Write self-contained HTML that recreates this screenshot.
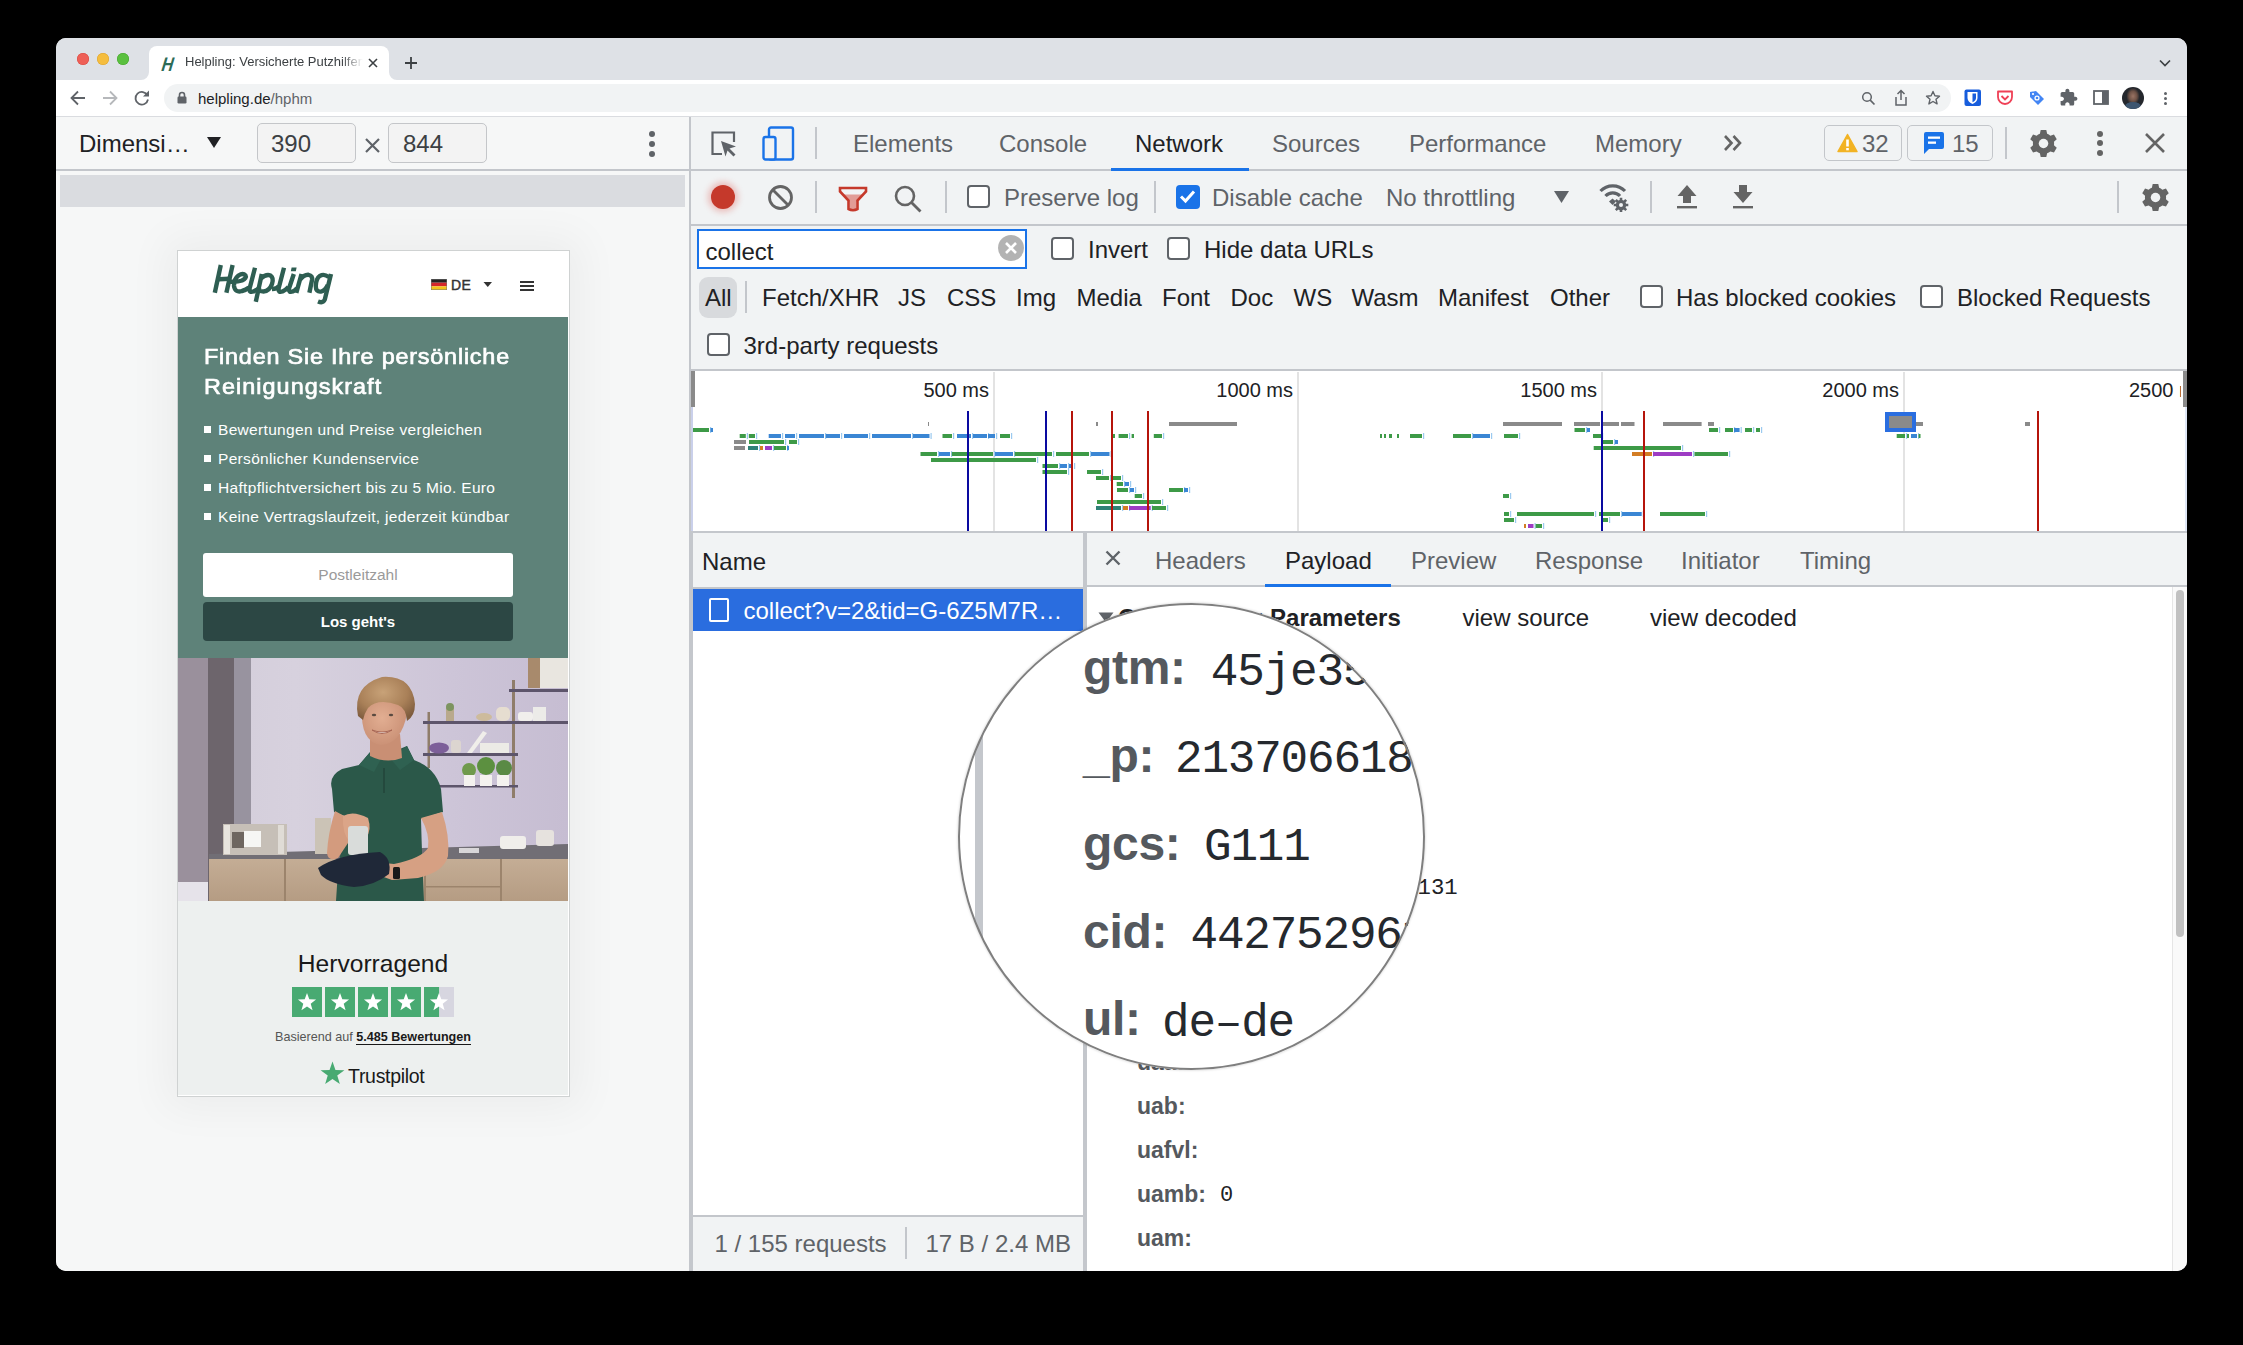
<!DOCTYPE html>
<html><head><meta charset="utf-8"><title>Helpling DevTools</title>
<style>
html,body{margin:0;padding:0;width:2243px;height:1345px;overflow:hidden;background:#000;}
body{position:relative;font-family:"Liberation Sans",sans-serif;}
</style></head><body>
<div style="position:absolute;left:56px;top:38px;width:2131px;height:1233px;background:#f6f7f7;border-radius:10px;overflow:hidden;"></div>
<div style="position:absolute;left:56px;top:38px;width:2131px;height:42px;background:#dee1e6;border-radius:10px 10px 0 0;"></div>
<div style="position:absolute;left:77px;top:53px;width:12px;height:12px;border-radius:50%;background:#ee5f57;box-shadow:inset 0 0 0 0.5px #d9463f;"></div>
<div style="position:absolute;left:97px;top:53px;width:12px;height:12px;border-radius:50%;background:#f5bd3e;box-shadow:inset 0 0 0 0.5px #dca22b;"></div>
<div style="position:absolute;left:117px;top:53px;width:12px;height:12px;border-radius:50%;background:#5ac03f;box-shadow:inset 0 0 0 0.5px #44a52b;"></div>
<div style="position:absolute;left:149px;top:46px;width:240px;height:34px;background:#fff;border-radius:8px 8px 0 0;"></div>
<svg style="position:absolute;left:141px;top:72px;" width="8" height="8" viewBox="0 0 8 8"><path d="M8 0 V8 H0 A8 8 0 0 0 8 0Z" fill="#fff"/></svg>
<svg style="position:absolute;left:389px;top:72px;" width="8" height="8" viewBox="0 0 8 8"><path d="M0 0 V8 H8 A8 8 0 0 1 0 0Z" fill="#fff"/></svg>
<div style="position:absolute;left:162px;top:54.51px;font-family:'Liberation Sans',sans-serif;font-size:19.5px;line-height:19.5px;color:#2c6b57;font-weight:700;white-space:nowrap;font-style:italic;transform:scaleX(0.82) skewX(-10deg);transform-origin:left;">H</div>
<div style="position:absolute;left:185px;top:52.3px;padding-top:3px;padding-bottom:4px;width:178px;overflow:hidden;font-family:'Liberation Sans',sans-serif;font-size:13px;line-height:13px;color:#3c4043;white-space:nowrap;-webkit-mask-image:linear-gradient(90deg,#000 88%,transparent 100%);">Helpling: Versicherte Putzhilfen</div>
<svg style="position:absolute;left:367px;top:57px;" width="12" height="12" viewBox="0 0 12 12"><path d="M2 2 L10 10 M10 2 L2 10" stroke="#3c4043" stroke-width="1.6"/></svg>
<svg style="position:absolute;left:404px;top:56px;" width="14" height="14" viewBox="0 0 14 14"><path d="M7 1 V13 M1 7 H13" stroke="#3c4043" stroke-width="1.8"/></svg>
<svg style="position:absolute;left:2158px;top:57px;" width="14" height="12" viewBox="0 0 14 12"><path d="M2 3.5 L7 8.5 L12 3.5" stroke="#3c4043" stroke-width="1.7" fill="none"/></svg>
<div style="position:absolute;left:56px;top:80px;width:2131px;height:36px;background:#fff;"></div>
<div style="position:absolute;left:56px;top:116px;width:2131px;height:1px;background:#dadce0;"></div>
<svg style="position:absolute;left:69px;top:89px;" width="18" height="18" viewBox="0 0 18 18"><path d="M16 9 H3 M9 2.5 L2.5 9 L9 15.5" stroke="#5f6368" stroke-width="1.8" fill="none"/></svg>
<svg style="position:absolute;left:101px;top:89px;" width="18" height="18" viewBox="0 0 18 18"><path d="M2 9 H15 M9 2.5 L15.5 9 L9 15.5" stroke="#b6b8bb" stroke-width="1.8" fill="none"/></svg>
<svg style="position:absolute;left:133px;top:89px;" width="18" height="18" viewBox="0 0 18 18"><path d="M14.5 6.5 A6.3 6.3 0 1 0 15 10.5" stroke="#5f6368" stroke-width="1.8" fill="none"/><path d="M16 1.5 V7.5 H10 Z" fill="#5f6368"/></svg>
<div style="position:absolute;left:164px;top:84px;width:1787px;height:28px;background:#f1f3f4;border-radius:14px;"></div>
<svg style="position:absolute;left:177px;top:91px;" width="10" height="13" viewBox="0 0 10 13"><path d="M2.5 6 V4 A2.5 2.5 0 0 1 7.5 4 V6" stroke="#5f6368" stroke-width="1.6" fill="none"/><rect x="0.5" y="5.5" width="9" height="7" rx="1.2" fill="#5f6368"/></svg>
<div style="position:absolute;left:198px;top:91.20px;font-family:'Liberation Sans',sans-serif;font-size:15px;line-height:15px;color:#202124;font-weight:400;white-space:nowrap;">helpling.de<span style="color:#5f6368">/hphm</span></div>
<svg style="position:absolute;left:1861px;top:91px;" width="15" height="15" viewBox="0 0 15 15"><circle cx="6" cy="6" r="4.3" stroke="#5f6368" stroke-width="1.5" fill="none"/><path d="M9.2 9.2 L13.5 13.5" stroke="#5f6368" stroke-width="1.7"/></svg>
<svg style="position:absolute;left:1893px;top:89px;" width="16" height="18" viewBox="0 0 16 18"><path d="M3 8 V16 H13 V8" stroke="#5f6368" stroke-width="1.5" fill="none"/><path d="M8 11 V2 M4.5 5 L8 1.5 L11.5 5" stroke="#5f6368" stroke-width="1.5" fill="none"/></svg>
<svg style="position:absolute;left:1925px;top:90px;" width="16" height="16" viewBox="0 0 16 16"><path d="M8 1.5 L9.9 5.8 L14.5 6.2 L11 9.3 L12.1 13.9 L8 11.5 L3.9 13.9 L5 9.3 L1.5 6.2 L6.1 5.8 Z" stroke="#5f6368" stroke-width="1.4" fill="none" stroke-linejoin="round"/></svg>
<svg style="position:absolute;left:1964px;top:89px;" width="18" height="18" viewBox="0 0 18 18"><rect x="0.5" y="0.5" width="16.5" height="16.5" rx="2" fill="#175ddc"/><path d="M3.5 3 H13.5 V9 C13.5 12 11 13.8 8.5 15 C6 13.8 3.5 12 3.5 9 Z" fill="#fff"/><path d="M8.5 4.5 H12 V9 C12 11 10.5 12.3 8.5 13.2 Z" fill="#175ddc"/></svg>
<svg style="position:absolute;left:1996px;top:89px;" width="18" height="18" viewBox="0 0 18 18"><path d="M2 2.5 H16 V8 A7 7 0 0 1 2 8 Z" stroke="#ef4056" stroke-width="1.8" fill="none" stroke-linejoin="round"/><path d="M5.5 7 L9 10.5 L12.5 7" stroke="#ef4056" stroke-width="1.8" fill="none"/></svg>
<svg style="position:absolute;left:2028px;top:89px;" width="18" height="18" viewBox="0 0 18 18"><path d="M2 3 L8 2 L16 10 L10 16 L2 8 Z" fill="#4285f4"/><circle cx="9" cy="9" r="2.6" fill="#fff"/><circle cx="9" cy="9" r="1.3" fill="#4285f4"/><circle cx="5" cy="5" r="1.1" fill="#fff"/></svg>
<svg style="position:absolute;left:2059px;top:88px;" width="20" height="20" viewBox="0 0 20 20"><g transform="scale(0.8)"><path d="M20.5 11H19V7c0-1.1-.9-2-2-2h-4V3.5C13 2.12 11.88 1 10.5 1S8 2.12 8 3.5V5H4c-1.1 0-1.99.9-1.99 2v3.8H3.5c1.49 0 2.7 1.21 2.7 2.7s-1.21 2.7-2.7 2.7H2V20c0 1.1.9 2 2 2h3.8v-1.5c0-1.49 1.21-2.7 2.7-2.7 1.49 0 2.7 1.21 2.7 2.7V22H17c1.1 0 2-.9 2-2v-4h1.5c1.38 0 2.5-1.12 2.5-2.5S21.88 11 20.5 11z" fill="#5f6368"/></g></svg>
<svg style="position:absolute;left:2093px;top:90px;" width="16" height="15" viewBox="0 0 16 15"><rect x="1" y="1" width="14" height="13" stroke="#5f6368" stroke-width="1.8" fill="none"/><rect x="9" y="1" width="6" height="13" fill="#5f6368"/></svg>
<div style="position:absolute;left:2122px;top:87px;width:22px;height:22px;border-radius:50%;background:radial-gradient(ellipse 30% 38% at 50% 42%,#9a7464 0,#6e5246 60%,#24272c 100%),#24272c;overflow:hidden;"><div style="position:absolute;left:3px;top:15px;width:16px;height:9px;border-radius:50% 50% 0 0;background:#3d5670;"></div></div>
<div style="position:absolute;left:2163.5px;top:91.9px;width:3.2px;height:3.2px;border-radius:50%;background:#5f6368;"></div>
<div style="position:absolute;left:2163.5px;top:96.9px;width:3.2px;height:3.2px;border-radius:50%;background:#5f6368;"></div>
<div style="position:absolute;left:2163.5px;top:101.9px;width:3.2px;height:3.2px;border-radius:50%;background:#5f6368;"></div>
<div style="position:absolute;left:56px;top:117px;width:633px;height:53px;background:#f6f7f7;"></div>
<div style="position:absolute;left:56px;top:169px;width:633px;height:2px;background:#c3c6cb;"></div>
<div style="position:absolute;left:79px;top:132.02px;font-family:'Liberation Sans',sans-serif;font-size:24px;line-height:24px;color:#202124;font-weight:400;white-space:nowrap;">Dimensi…</div>
<svg style="position:absolute;left:206px;top:136px;" width="16" height="13" viewBox="0 0 16 13"><path d="M1 1 H15 L8 12 Z" fill="#202124"/></svg>
<div style="position:absolute;left:257px;top:123px;width:97px;height:38px;border:1px solid #c4c6c9;border-radius:5px;background:#f3f3f3;"></div>
<div style="position:absolute;left:271px;top:132.02px;font-family:'Liberation Sans',sans-serif;font-size:24px;line-height:24px;color:#3c4043;font-weight:400;white-space:nowrap;">390</div>
<svg style="position:absolute;left:364px;top:137px;" width="17" height="17" viewBox="0 0 17 17"><path d="M2 2 L15 15 M15 2 L2 15" stroke="#5f6368" stroke-width="2.2"/></svg>
<div style="position:absolute;left:388px;top:123px;width:97px;height:38px;border:1px solid #c4c6c9;border-radius:5px;background:#f3f3f3;"></div>
<div style="position:absolute;left:403px;top:132.02px;font-family:'Liberation Sans',sans-serif;font-size:24px;line-height:24px;color:#3c4043;font-weight:400;white-space:nowrap;">844</div>
<div style="position:absolute;left:649px;top:131px;width:6px;height:6px;border-radius:50%;background:#5f6368;"></div>
<div style="position:absolute;left:649px;top:141px;width:6px;height:6px;border-radius:50%;background:#5f6368;"></div>
<div style="position:absolute;left:649px;top:151px;width:6px;height:6px;border-radius:50%;background:#5f6368;"></div>
<div style="position:absolute;left:56px;top:171px;width:633px;height:1100px;background:#f6f7f7;border-bottom-left-radius:10px;"></div>
<div style="position:absolute;left:60px;top:175px;width:625px;height:32px;background:#dadce0;"></div>
<div style="position:absolute;left:689px;top:117px;width:2px;height:1154px;background:#c3c6cb;"></div>
<div style="position:absolute;left:691px;top:117px;width:1496px;height:52px;background:#f1f3f4;"></div>
<div style="position:absolute;left:691px;top:169px;width:1496px;height:2px;background:#c3c6cb;"></div>
<svg style="position:absolute;left:710px;top:130px;" width="28" height="28" viewBox="0 0 28 28"><path d="M12 24 H2.5 V2.5 H24 V12" stroke="#5f6368" stroke-width="2.2" fill="none"/><path d="M11 11 L26 16.5 L19.5 18.5 L25.5 24.5 L23.5 26.5 L17.5 20.5 L15.5 26.5 Z" fill="#5f6368"/></svg>
<svg style="position:absolute;left:762px;top:126px;" width="33" height="35" viewBox="0 0 33 35"><rect x="7" y="1.5" width="24" height="32" rx="2" stroke="#1a73e8" stroke-width="2.4" fill="none"/><rect x="1.5" y="11" width="12" height="22.5" rx="2" stroke="#1a73e8" stroke-width="2.4" fill="#f1f3f4"/></svg>
<div style="position:absolute;left:815px;top:127px;width:2px;height:32px;background:#c3c6cb;"></div>
<div style="position:absolute;left:853px;top:132.02px;font-family:'Liberation Sans',sans-serif;font-size:24px;line-height:24px;color:#5f6368;font-weight:400;white-space:nowrap;">Elements</div>
<div style="position:absolute;left:999px;top:132.02px;font-family:'Liberation Sans',sans-serif;font-size:24px;line-height:24px;color:#5f6368;font-weight:400;white-space:nowrap;">Console</div>
<div style="position:absolute;left:1135px;top:132.02px;font-family:'Liberation Sans',sans-serif;font-size:24px;line-height:24px;color:#202124;font-weight:400;white-space:nowrap;">Network</div>
<div style="position:absolute;left:1272px;top:132.02px;font-family:'Liberation Sans',sans-serif;font-size:24px;line-height:24px;color:#5f6368;font-weight:400;white-space:nowrap;">Sources</div>
<div style="position:absolute;left:1409px;top:132.02px;font-family:'Liberation Sans',sans-serif;font-size:24px;line-height:24px;color:#5f6368;font-weight:400;white-space:nowrap;">Performance</div>
<div style="position:absolute;left:1595px;top:132.02px;font-family:'Liberation Sans',sans-serif;font-size:24px;line-height:24px;color:#5f6368;font-weight:400;white-space:nowrap;">Memory</div>
<div style="position:absolute;left:1111px;top:168px;width:138px;height:3px;background:#1a73e8;"></div>
<svg style="position:absolute;left:1723px;top:133px;" width="22" height="20" viewBox="0 0 22 20"><path d="M2 3 L8.5 10 L2 17 M10.5 3 L17 10 L10.5 17" stroke="#646464" stroke-width="2.6" fill="none"/></svg>
<div style="position:absolute;left:1824px;top:125px;width:78px;height:36px;border:1.6px solid #c3c6ca;border-radius:5px;box-sizing:border-box;"></div>
<svg style="position:absolute;left:1837px;top:133px;" width="21" height="20" viewBox="0 0 21 20"><path d="M10.5 1.5 L20 18.5 H1 Z" fill="#f2b324" stroke="#f2b324" stroke-width="1.5" stroke-linejoin="round"/><rect x="9.2" y="6.5" width="2.6" height="7" fill="#fff"/><rect x="9.2" y="15" width="2.6" height="2.3" fill="#fff"/></svg>
<div style="position:absolute;left:1862px;top:132.02px;font-family:'Liberation Sans',sans-serif;font-size:24px;line-height:24px;color:#5f6368;font-weight:400;white-space:nowrap;">32</div>
<div style="position:absolute;left:1907px;top:125px;width:86px;height:36px;border:1.6px solid #c3c6ca;border-radius:5px;box-sizing:border-box;"></div>
<svg style="position:absolute;left:1923px;top:131px;" width="22" height="24" viewBox="0 0 22 24"><path d="M3 1 H19 A2 2 0 0 1 21 3 V16 A2 2 0 0 1 19 18 H6 L1 23 V3 A2 2 0 0 1 3 1 Z" fill="#1a73e8"/><rect x="5" y="5.5" width="12" height="2.3" fill="#fff"/><rect x="5" y="10.5" width="8" height="2.3" fill="#fff"/></svg>
<div style="position:absolute;left:1952px;top:132.02px;font-family:'Liberation Sans',sans-serif;font-size:24px;line-height:24px;color:#5f6368;font-weight:400;white-space:nowrap;">15</div>
<div style="position:absolute;left:2005px;top:127px;width:2px;height:32px;background:#c3c6cb;"></div>
<svg style="position:absolute;left:2028.5px;top:128.5px;" width="29" height="29" viewBox="0 0 29 29"><g transform="scale(1.036)"><path d="M11.3 1 H16.7 L17.5 4.6 A10 10 0 0 1 20.6 6.4 L24.1 5.3 L26.8 9.9 L24.1 12.4 A10 10 0 0 1 24.1 15.6 L26.8 18.1 L24.1 22.7 L20.6 21.6 A10 10 0 0 1 17.5 23.4 L16.7 27 H11.3 L10.5 23.4 A10 10 0 0 1 7.4 21.6 L3.9 22.7 L1.2 18.1 L3.9 15.6 A10 10 0 0 1 3.9 12.4 L1.2 9.9 L3.9 5.3 L7.4 6.4 A10 10 0 0 1 10.5 4.6 Z" fill="#646464"/><circle cx="14" cy="14" r="4.6" fill="#f1f3f4"/></g></svg>
<div style="position:absolute;left:2097px;top:130.5px;width:6px;height:6px;border-radius:50%;background:#646464;"></div>
<div style="position:absolute;left:2097px;top:140.3px;width:6px;height:6px;border-radius:50%;background:#646464;"></div>
<div style="position:absolute;left:2097px;top:150px;width:6px;height:6px;border-radius:50%;background:#646464;"></div>
<svg style="position:absolute;left:2144px;top:132px;" width="22" height="22" viewBox="0 0 22 22"><path d="M2 2 L20 20 M20 2 L2 20" stroke="#646464" stroke-width="2.6"/></svg>
<div style="position:absolute;left:691px;top:171px;width:1496px;height:53px;background:#f1f3f4;"></div>
<div style="position:absolute;left:691px;top:224px;width:1496px;height:2px;background:#c3c6cb;"></div>
<div style="position:absolute;left:711px;top:185px;width:24px;height:24px;border-radius:50%;background:#c5392b;box-shadow:0 0 6px 3px rgba(217,48,37,0.28);"></div>
<svg style="position:absolute;left:767px;top:184px;" width="27" height="27" viewBox="0 0 27 27"><circle cx="13.5" cy="13.5" r="11" stroke="#646464" stroke-width="2.8" fill="none"/><path d="M6 6 L21 21" stroke="#646464" stroke-width="2.8"/></svg>
<div style="position:absolute;left:815px;top:181px;width:2px;height:32px;background:#c3c6cb;"></div>
<svg style="position:absolute;left:838px;top:186px;" width="30" height="26" viewBox="0 0 30 26"><path d="M4 8.5 H26 L18.5 16 V23 Q15 25 11.5 23 V16 Z" fill="#e29c96"/><path d="M2 2 H28 V5.5 L19.5 14.5 V23 Q15 25.5 10.5 23 V14.5 L2 5.5 Z" fill="none" stroke="#c5392b" stroke-width="2.6" stroke-linejoin="miter"/></svg>
<svg style="position:absolute;left:893px;top:184px;" width="30" height="30" viewBox="0 0 30 30"><circle cx="12" cy="12" r="9" stroke="#646464" stroke-width="2.6" fill="none"/><path d="M18.5 18.5 L27.5 27.5" stroke="#646464" stroke-width="2.8"/></svg>
<div style="position:absolute;left:945px;top:181px;width:2px;height:32px;background:#c3c6cb;"></div>
<div style="position:absolute;left:967px;top:185px;width:19px;height:19px;border:2px solid #5f6368;border-radius:4px;background:#fff;"></div>
<div style="position:absolute;left:1004px;top:186.32px;font-family:'Liberation Sans',sans-serif;font-size:24px;line-height:24px;color:#5f6368;font-weight:400;white-space:nowrap;">Preserve log</div>
<div style="position:absolute;left:1154px;top:181px;width:2px;height:32px;background:#c3c6cb;"></div>
<div style="position:absolute;left:1176px;top:185px;width:24px;height:24px;border-radius:4px;background:#1a73e8;"></div>
<svg style="position:absolute;left:1176px;top:185px;" width="24" height="24" viewBox="0 0 24 24"><path d="M5 11.5 L9.5 16 L18 6.5" stroke="#fff" stroke-width="3" fill="none"/></svg>
<div style="position:absolute;left:1212px;top:186.32px;font-family:'Liberation Sans',sans-serif;font-size:24px;line-height:24px;color:#5f6368;font-weight:400;white-space:nowrap;">Disable cache</div>
<div style="position:absolute;left:1386px;top:186.32px;font-family:'Liberation Sans',sans-serif;font-size:24px;line-height:24px;color:#5f6368;font-weight:400;white-space:nowrap;">No throttling</div>
<svg style="position:absolute;left:1553px;top:190px;" width="17" height="14" viewBox="0 0 17 14"><path d="M1 1 H16 L8.5 13 Z" fill="#5f6368"/></svg>
<svg style="position:absolute;left:1598px;top:182px;" width="36" height="30" viewBox="0 0 36 30"><path d="M2.5 9 A17 17 0 0 1 27 9" stroke="#5f6368" stroke-width="3.2" fill="none"/><path d="M7.5 14 A10 10 0 0 1 22 14" stroke="#5f6368" stroke-width="3.2" fill="none"/><path d="M11 19.5 L14.5 16.5 L18 19.5 L14.5 23 Z" fill="#5f6368"/><g transform="translate(23 23)"><circle r="5.2" fill="#5f6368"/><path d="M0 -7.3 V7.3 M-7.3 0 H7.3 M-5.2 -5.2 L5.2 5.2 M5.2 -5.2 L-5.2 5.2" stroke="#5f6368" stroke-width="2.6"/><circle r="2" fill="#f1f3f4"/></g></svg>
<div style="position:absolute;left:1650px;top:181px;width:2px;height:32px;background:#c3c6cb;"></div>
<svg style="position:absolute;left:1676px;top:184px;" width="22" height="26" viewBox="0 0 22 26"><path d="M11 1 L20.5 12 H15 V19 H7 V12 H1.5 Z" fill="#646464"/><rect x="1" y="22" width="20" height="2.4" fill="#646464"/></svg>
<svg style="position:absolute;left:1732px;top:184px;" width="22" height="26" viewBox="0 0 22 26"><path d="M7 1 H15 V8 H20.5 L11 19 L1.5 8 H7 Z" fill="#646464"/><rect x="1" y="22" width="20" height="2.4" fill="#646464"/></svg>
<div style="position:absolute;left:2117px;top:181px;width:2px;height:32px;background:#c3c6cb;"></div>
<svg style="position:absolute;left:2140.5px;top:182.5px;" width="29" height="29" viewBox="0 0 29 29"><g transform="scale(1.036)"><path d="M11.3 1 H16.7 L17.5 4.6 A10 10 0 0 1 20.6 6.4 L24.1 5.3 L26.8 9.9 L24.1 12.4 A10 10 0 0 1 24.1 15.6 L26.8 18.1 L24.1 22.7 L20.6 21.6 A10 10 0 0 1 17.5 23.4 L16.7 27 H11.3 L10.5 23.4 A10 10 0 0 1 7.4 21.6 L3.9 22.7 L1.2 18.1 L3.9 15.6 A10 10 0 0 1 3.9 12.4 L1.2 9.9 L3.9 5.3 L7.4 6.4 A10 10 0 0 1 10.5 4.6 Z" fill="#646464"/><circle cx="14" cy="14" r="4.6" fill="#f1f3f4"/></g></svg>
<div style="position:absolute;left:691px;top:226px;width:1496px;height:143px;background:#f1f3f4;"></div>
<div style="position:absolute;left:691px;top:369px;width:1496px;height:2px;background:#c3c6cb;"></div>
<div style="position:absolute;left:697px;top:229px;width:326px;height:36px;border:2px solid #1a73e8;background:#fff;"></div>
<div style="position:absolute;left:705.5px;top:240.32px;font-family:'Liberation Sans',sans-serif;font-size:24px;line-height:24px;color:#202124;font-weight:400;white-space:nowrap;">collect</div>
<div style="position:absolute;left:998px;top:235px;width:26px;height:26px;border-radius:50%;background:#b3b3b3;"></div>
<svg style="position:absolute;left:998px;top:235px;" width="26" height="26" viewBox="0 0 26 26"><path d="M8 8 L18 18 M18 8 L8 18" stroke="#fff" stroke-width="2.6"/></svg>
<div style="position:absolute;left:1051px;top:237px;width:19px;height:19px;border:2px solid #5f6368;border-radius:4px;background:#fff;"></div>
<div style="position:absolute;left:1088px;top:238.32px;font-family:'Liberation Sans',sans-serif;font-size:24px;line-height:24px;color:#202124;font-weight:400;white-space:nowrap;">Invert</div>
<div style="position:absolute;left:1167px;top:237px;width:19px;height:19px;border:2px solid #5f6368;border-radius:4px;background:#fff;"></div>
<div style="position:absolute;left:1204px;top:238.32px;font-family:'Liberation Sans',sans-serif;font-size:24px;line-height:24px;color:#202124;font-weight:400;white-space:nowrap;">Hide data URLs</div>
<div style="position:absolute;left:699px;top:277px;width:38px;height:41px;border-radius:9px;background:#d8dadd;"></div>
<div style="position:absolute;left:705px;top:285.92px;font-family:'Liberation Sans',sans-serif;font-size:24px;line-height:24px;color:#202124;font-weight:400;white-space:nowrap;">All</div>
<div style="position:absolute;left:745px;top:281px;width:2px;height:32px;background:#c3c6cb;"></div>
<div style="position:absolute;left:762px;top:285.92px;font-family:'Liberation Sans',sans-serif;font-size:24px;line-height:24px;color:#202124;font-weight:400;white-space:nowrap;">Fetch/XHR</div>
<div style="position:absolute;left:898px;top:285.92px;font-family:'Liberation Sans',sans-serif;font-size:24px;line-height:24px;color:#202124;font-weight:400;white-space:nowrap;">JS</div>
<div style="position:absolute;left:947px;top:285.92px;font-family:'Liberation Sans',sans-serif;font-size:24px;line-height:24px;color:#202124;font-weight:400;white-space:nowrap;">CSS</div>
<div style="position:absolute;left:1016px;top:285.92px;font-family:'Liberation Sans',sans-serif;font-size:24px;line-height:24px;color:#202124;font-weight:400;white-space:nowrap;">Img</div>
<div style="position:absolute;left:1076.5px;top:285.92px;font-family:'Liberation Sans',sans-serif;font-size:24px;line-height:24px;color:#202124;font-weight:400;white-space:nowrap;">Media</div>
<div style="position:absolute;left:1162px;top:285.92px;font-family:'Liberation Sans',sans-serif;font-size:24px;line-height:24px;color:#202124;font-weight:400;white-space:nowrap;">Font</div>
<div style="position:absolute;left:1230.5px;top:285.92px;font-family:'Liberation Sans',sans-serif;font-size:24px;line-height:24px;color:#202124;font-weight:400;white-space:nowrap;">Doc</div>
<div style="position:absolute;left:1293.5px;top:285.92px;font-family:'Liberation Sans',sans-serif;font-size:24px;line-height:24px;color:#202124;font-weight:400;white-space:nowrap;">WS</div>
<div style="position:absolute;left:1351.5px;top:285.92px;font-family:'Liberation Sans',sans-serif;font-size:24px;line-height:24px;color:#202124;font-weight:400;white-space:nowrap;">Wasm</div>
<div style="position:absolute;left:1438px;top:285.92px;font-family:'Liberation Sans',sans-serif;font-size:24px;line-height:24px;color:#202124;font-weight:400;white-space:nowrap;">Manifest</div>
<div style="position:absolute;left:1550px;top:285.92px;font-family:'Liberation Sans',sans-serif;font-size:24px;line-height:24px;color:#202124;font-weight:400;white-space:nowrap;">Other</div>
<div style="position:absolute;left:1640px;top:285px;width:19px;height:19px;border:2px solid #5f6368;border-radius:4px;background:#fff;"></div>
<div style="position:absolute;left:1676px;top:285.92px;font-family:'Liberation Sans',sans-serif;font-size:24px;line-height:24px;color:#202124;font-weight:400;white-space:nowrap;">Has blocked cookies</div>
<div style="position:absolute;left:1920px;top:285px;width:19px;height:19px;border:2px solid #5f6368;border-radius:4px;background:#fff;"></div>
<div style="position:absolute;left:1957px;top:285.92px;font-family:'Liberation Sans',sans-serif;font-size:24px;line-height:24px;color:#202124;font-weight:400;white-space:nowrap;">Blocked Requests</div>
<div style="position:absolute;left:707px;top:333px;width:19px;height:19px;border:2px solid #5f6368;border-radius:4px;background:#fff;"></div>
<div style="position:absolute;left:743.5px;top:333.72px;font-family:'Liberation Sans',sans-serif;font-size:24px;line-height:24px;color:#202124;font-weight:400;white-space:nowrap;">3rd-party requests</div>
<div style="position:absolute;left:691px;top:371px;width:1496px;height:160px;background:#ffffff;"></div>
<div style="position:absolute;left:993px;top:372px;width:2px;height:159px;background:#e3e3e3;"></div>
<div style="position:absolute;left:1297px;top:372px;width:2px;height:159px;background:#e3e3e3;"></div>
<div style="position:absolute;left:1601px;top:372px;width:2px;height:159px;background:#e3e3e3;"></div>
<div style="position:absolute;left:1903px;top:372px;width:2px;height:159px;background:#e3e3e3;"></div>
<div style="position:absolute;right:1254px;top:379.80px;font-family:'Liberation Sans',sans-serif;font-size:20px;line-height:20px;color:#202124;font-weight:400;white-space:nowrap;">500 ms</div>
<div style="position:absolute;right:950px;top:379.80px;font-family:'Liberation Sans',sans-serif;font-size:20px;line-height:20px;color:#202124;font-weight:400;white-space:nowrap;">1000 ms</div>
<div style="position:absolute;right:646px;top:379.80px;font-family:'Liberation Sans',sans-serif;font-size:20px;line-height:20px;color:#202124;font-weight:400;white-space:nowrap;">1500 ms</div>
<div style="position:absolute;right:344px;top:379.80px;font-family:'Liberation Sans',sans-serif;font-size:20px;line-height:20px;color:#202124;font-weight:400;white-space:nowrap;">2000 ms</div>
<div style="position:absolute;left:2129px;top:379.8px;width:52px;overflow:hidden;font-family:'Liberation Sans',sans-serif;font-size:20px;line-height:20px;color:#202124;white-space:nowrap;">2500 ms</div>
<svg style="position:absolute;left:691px;top:372px;" width="1496" height="159" viewBox="0 0 1496 159"><rect x="237.0" y="50" width="1.0" height="4" fill="#8a8a8a"/><rect x="405.0" y="50" width="2.0" height="4" fill="#8a8a8a"/><rect x="478.0" y="50" width="68.0" height="4" fill="#8a8a8a"/><rect x="812.0" y="50" width="59.0" height="4" fill="#8a8a8a"/><rect x="883.0" y="50" width="26.0" height="4" fill="#8a8a8a"/><rect x="912.0" y="50" width="16.0" height="4" fill="#8a8a8a"/><rect x="930.0" y="50" width="13.5" height="4" fill="#8a8a8a"/><rect x="972.0" y="50" width="38.6" height="4" fill="#8a8a8a"/><rect x="1017.0" y="50" width="6.0" height="4" fill="#8a8a8a"/><rect x="1225.0" y="50" width="7.0" height="4" fill="#8a8a8a"/><rect x="1334.0" y="50" width="5.0" height="4" fill="#8a8a8a"/><rect x="1.5" y="56" width="16.5" height="4" fill="#3d9a47"/><rect x="19.0" y="55" width="1.2" height="6" fill="#9ccaf0"/><rect x="19.5" y="56" width="2.5" height="4" fill="#3a86d4"/><rect x="883.5" y="56" width="10.5" height="4" fill="#3d9a47"/><rect x="895.0" y="55" width="1.2" height="6" fill="#9ccaf0"/><rect x="896.0" y="56" width="3.0" height="4" fill="#3a86d4"/><rect x="1018.0" y="56" width="9.0" height="4" fill="#3d9a47"/><rect x="1028.0" y="55" width="1.2" height="6" fill="#9ccaf0"/><rect x="1034.0" y="56" width="8.0" height="4" fill="#3d9a47"/><rect x="1043.0" y="55" width="1.2" height="6" fill="#9ccaf0"/><rect x="1043.0" y="56" width="5.6" height="4" fill="#3a86d4"/><rect x="1049.6" y="55" width="1.2" height="6" fill="#9ccaf0"/><rect x="1054.0" y="56" width="7.0" height="4" fill="#3d9a47"/><rect x="1062.0" y="55" width="1.2" height="6" fill="#9ccaf0"/><rect x="1065.0" y="56" width="4.0" height="4" fill="#3d9a47"/><rect x="1070.0" y="55" width="1.2" height="6" fill="#9ccaf0"/><rect x="48.7" y="62" width="6.1" height="4" fill="#3d9a47"/><rect x="55.8" y="61" width="1.2" height="6" fill="#9ccaf0"/><rect x="57.8" y="62" width="6.2" height="4" fill="#3d9a47"/><rect x="65.0" y="61" width="1.2" height="6" fill="#9ccaf0"/><rect x="77.7" y="62" width="12.3" height="4" fill="#3a86d4"/><rect x="91.0" y="61" width="1.2" height="6" fill="#9ccaf0"/><rect x="94.0" y="62" width="10.0" height="4" fill="#3a86d4"/><rect x="105.0" y="61" width="1.2" height="6" fill="#9ccaf0"/><rect x="108.0" y="62" width="25.0" height="4" fill="#3a86d4"/><rect x="134.0" y="61" width="1.2" height="6" fill="#9ccaf0"/><rect x="134.8" y="62" width="14.2" height="4" fill="#3a86d4"/><rect x="150.0" y="61" width="1.2" height="6" fill="#9ccaf0"/><rect x="153.0" y="62" width="24.0" height="4" fill="#3a86d4"/><rect x="178.0" y="61" width="1.2" height="6" fill="#9ccaf0"/><rect x="181.0" y="62" width="39.0" height="4" fill="#3a86d4"/><rect x="221.0" y="61" width="1.2" height="6" fill="#9ccaf0"/><rect x="222.0" y="62" width="16.5" height="4" fill="#3a86d4"/><rect x="239.5" y="61" width="1.2" height="6" fill="#9ccaf0"/><rect x="251.5" y="62" width="9.5" height="4" fill="#3d9a47"/><rect x="262.0" y="61" width="1.2" height="6" fill="#9ccaf0"/><rect x="266.0" y="62" width="14.0" height="4" fill="#3a86d4"/><rect x="281.0" y="61" width="1.2" height="6" fill="#9ccaf0"/><rect x="282.0" y="62" width="14.0" height="4" fill="#3a86d4"/><rect x="297.0" y="61" width="1.2" height="6" fill="#9ccaf0"/><rect x="297.0" y="62" width="7.0" height="4" fill="#3a86d4"/><rect x="305.0" y="61" width="1.2" height="6" fill="#9ccaf0"/><rect x="309.0" y="62" width="10.0" height="4" fill="#3d9a47"/><rect x="320.0" y="61" width="1.2" height="6" fill="#9ccaf0"/><rect x="422.0" y="62" width="2.0" height="4" fill="#3d9a47"/><rect x="427.6" y="62" width="9.4" height="4" fill="#3d9a47"/><rect x="438.0" y="61" width="1.2" height="6" fill="#9ccaf0"/><rect x="440.6" y="62" width="2.4" height="4" fill="#3d9a47"/><rect x="462.8" y="62" width="8.2" height="4" fill="#3d9a47"/><rect x="472.0" y="61" width="1.2" height="6" fill="#9ccaf0"/><rect x="689.0" y="62" width="2.0" height="4" fill="#3d9a47"/><rect x="693.0" y="62" width="2.0" height="4" fill="#3d9a47"/><rect x="698.0" y="62" width="3.0" height="4" fill="#3d9a47"/><rect x="706.0" y="62" width="2.0" height="4" fill="#3d9a47"/><rect x="719.0" y="62" width="12.0" height="4" fill="#3d9a47"/><rect x="732.0" y="61" width="1.2" height="6" fill="#9ccaf0"/><rect x="762.0" y="62" width="18.0" height="4" fill="#3d9a47"/><rect x="781.0" y="61" width="1.2" height="6" fill="#9ccaf0"/><rect x="782.0" y="62" width="17.0" height="4" fill="#3a86d4"/><rect x="800.0" y="61" width="1.2" height="6" fill="#9ccaf0"/><rect x="813.0" y="62" width="14.0" height="4" fill="#3d9a47"/><rect x="828.0" y="61" width="1.2" height="6" fill="#9ccaf0"/><rect x="902.0" y="62" width="8.0" height="4" fill="#3d9a47"/><rect x="911.0" y="61" width="1.2" height="6" fill="#9ccaf0"/><rect x="1205.7" y="62" width="8.3" height="4" fill="#3d9a47"/><rect x="1215.0" y="61" width="1.2" height="6" fill="#9ccaf0"/><rect x="1216.0" y="62" width="2.0" height="4" fill="#3d9a47"/><rect x="1220.0" y="62" width="6.0" height="4" fill="#3a86d4"/><rect x="1227.0" y="61" width="1.2" height="6" fill="#9ccaf0"/><rect x="1227.6" y="62" width="1.9" height="4" fill="#3d9a47"/><rect x="43.0" y="68" width="12.0" height="4" fill="#8a8a8a"/><rect x="58.0" y="68" width="35.0" height="4" fill="#3d9a47"/><rect x="94.0" y="67" width="1.2" height="6" fill="#9ccaf0"/><rect x="98.0" y="68" width="8.0" height="4" fill="#3d9a47"/><rect x="107.0" y="67" width="1.2" height="6" fill="#9ccaf0"/><rect x="912.0" y="68" width="10.0" height="4" fill="#3d9a47"/><rect x="923.0" y="67" width="1.2" height="6" fill="#9ccaf0"/><rect x="924.0" y="68" width="3.0" height="4" fill="#3a86d4"/><rect x="43.0" y="74" width="11.0" height="4" fill="#8a8a8a"/><rect x="57.0" y="74" width="10.0" height="4" fill="#2f8277"/><rect x="68.0" y="73" width="1.2" height="6" fill="#9ccaf0"/><rect x="69.0" y="74" width="3.0" height="4" fill="#d37d24"/><rect x="74.0" y="74" width="7.0" height="4" fill="#9d3cc4"/><rect x="82.0" y="73" width="1.2" height="6" fill="#9ccaf0"/><rect x="83.0" y="74" width="12.0" height="4" fill="#3d9a47"/><rect x="96.0" y="73" width="1.2" height="6" fill="#9ccaf0"/><rect x="96.0" y="74" width="2.0" height="4" fill="#3a86d4"/><rect x="902.7" y="74" width="87.3" height="4" fill="#3d9a47"/><rect x="991.0" y="73" width="1.2" height="6" fill="#9ccaf0"/><rect x="229.5" y="80" width="16.5" height="4" fill="#3d9a47"/><rect x="247.0" y="79" width="1.2" height="6" fill="#9ccaf0"/><rect x="248.0" y="80" width="11.0" height="4" fill="#3a86d4"/><rect x="260.0" y="79" width="1.2" height="6" fill="#9ccaf0"/><rect x="260.8" y="80" width="41.2" height="4" fill="#3d9a47"/><rect x="303.0" y="79" width="1.2" height="6" fill="#9ccaf0"/><rect x="304.0" y="80" width="18.0" height="4" fill="#3a86d4"/><rect x="323.0" y="79" width="1.2" height="6" fill="#9ccaf0"/><rect x="323.7" y="80" width="37.3" height="4" fill="#3d9a47"/><rect x="362.0" y="79" width="1.2" height="6" fill="#9ccaf0"/><rect x="365.0" y="80" width="33.0" height="4" fill="#3d9a47"/><rect x="399.0" y="79" width="1.2" height="6" fill="#9ccaf0"/><rect x="400.0" y="80" width="18.5" height="4" fill="#3a86d4"/><rect x="419.5" y="79" width="1.2" height="6" fill="#9ccaf0"/><rect x="941.0" y="80" width="20.0" height="4" fill="#d37d24"/><rect x="962.0" y="79" width="1.2" height="6" fill="#9ccaf0"/><rect x="962.0" y="80" width="39.0" height="4" fill="#9d3cc4"/><rect x="1002.0" y="79" width="1.2" height="6" fill="#9ccaf0"/><rect x="1003.5" y="80" width="33.5" height="4" fill="#3d9a47"/><rect x="1038.0" y="79" width="1.2" height="6" fill="#9ccaf0"/><rect x="240.0" y="86" width="105.0" height="4" fill="#3d9a47"/><rect x="346.0" y="85" width="1.2" height="6" fill="#9ccaf0"/><rect x="351.5" y="92" width="15.5" height="4" fill="#3d9a47"/><rect x="368.0" y="91" width="1.2" height="6" fill="#9ccaf0"/><rect x="369.0" y="92" width="7.0" height="4" fill="#3a86d4"/><rect x="377.0" y="91" width="1.2" height="6" fill="#9ccaf0"/><rect x="378.0" y="92" width="4.0" height="4" fill="#3a86d4"/><rect x="383.0" y="91" width="1.2" height="6" fill="#9ccaf0"/><rect x="351.5" y="98" width="24.5" height="4" fill="#3d9a47"/><rect x="377.0" y="97" width="1.2" height="6" fill="#9ccaf0"/><rect x="396.0" y="98" width="14.0" height="4" fill="#3d9a47"/><rect x="411.0" y="97" width="1.2" height="6" fill="#9ccaf0"/><rect x="405.0" y="104" width="13.0" height="4" fill="#3d9a47"/><rect x="419.0" y="103" width="1.2" height="6" fill="#9ccaf0"/><rect x="420.0" y="104" width="10.0" height="4" fill="#3d9a47"/><rect x="431.0" y="103" width="1.2" height="6" fill="#9ccaf0"/><rect x="425.7" y="110" width="6.3" height="4" fill="#3d9a47"/><rect x="433.0" y="109" width="1.2" height="6" fill="#9ccaf0"/><rect x="433.7" y="110" width="4.3" height="4" fill="#3a86d4"/><rect x="439.0" y="109" width="1.2" height="6" fill="#9ccaf0"/><rect x="426.0" y="116" width="11.0" height="4" fill="#3d9a47"/><rect x="438.0" y="115" width="1.2" height="6" fill="#9ccaf0"/><rect x="439.0" y="116" width="4.0" height="4" fill="#3a86d4"/><rect x="444.0" y="115" width="1.2" height="6" fill="#9ccaf0"/><rect x="478.0" y="116" width="14.0" height="4" fill="#3d9a47"/><rect x="493.0" y="115" width="1.2" height="6" fill="#9ccaf0"/><rect x="493.0" y="116" width="4.0" height="4" fill="#3a86d4"/><rect x="498.0" y="115" width="1.2" height="6" fill="#9ccaf0"/><rect x="443.7" y="122" width="7.3" height="4" fill="#3d9a47"/><rect x="452.0" y="121" width="1.2" height="6" fill="#9ccaf0"/><rect x="812.0" y="122" width="6.0" height="4" fill="#3d9a47"/><rect x="819.0" y="121" width="1.2" height="6" fill="#9ccaf0"/><rect x="406.0" y="128" width="64.0" height="4" fill="#3d9a47"/><rect x="471.0" y="127" width="1.2" height="6" fill="#9ccaf0"/><rect x="405.0" y="134" width="25.0" height="4" fill="#2f8277"/><rect x="431.0" y="133" width="1.2" height="6" fill="#9ccaf0"/><rect x="432.0" y="134" width="5.0" height="4" fill="#d37d24"/><rect x="438.0" y="133" width="1.2" height="6" fill="#9ccaf0"/><rect x="438.0" y="134" width="21.7" height="4" fill="#9d3cc4"/><rect x="460.7" y="133" width="1.2" height="6" fill="#9ccaf0"/><rect x="461.0" y="134" width="14.0" height="4" fill="#3d9a47"/><rect x="476.0" y="133" width="1.2" height="6" fill="#9ccaf0"/><rect x="813.0" y="140" width="5.0" height="4" fill="#3d9a47"/><rect x="819.0" y="139" width="1.2" height="6" fill="#9ccaf0"/><rect x="826.0" y="140" width="77.0" height="4" fill="#3d9a47"/><rect x="904.0" y="139" width="1.2" height="6" fill="#9ccaf0"/><rect x="908.0" y="140" width="21.0" height="4" fill="#3d9a47"/><rect x="930.0" y="139" width="1.2" height="6" fill="#9ccaf0"/><rect x="931.0" y="140" width="19.7" height="4" fill="#3a86d4"/><rect x="951.7" y="139" width="1.2" height="6" fill="#9ccaf0"/><rect x="969.0" y="140" width="45.0" height="4" fill="#3d9a47"/><rect x="1015.0" y="139" width="1.2" height="6" fill="#9ccaf0"/><rect x="813.0" y="146" width="10.0" height="4" fill="#3d9a47"/><rect x="824.0" y="145" width="1.2" height="6" fill="#9ccaf0"/><rect x="912.0" y="146" width="5.0" height="4" fill="#3d9a47"/><rect x="918.0" y="145" width="1.2" height="6" fill="#9ccaf0"/><rect x="833.0" y="152" width="2.0" height="4" fill="#d37d24"/><rect x="837.0" y="152" width="5.5" height="4" fill="#9d3cc4"/><rect x="843.5" y="151" width="1.2" height="6" fill="#9ccaf0"/><rect x="844.6" y="152" width="6.4" height="4" fill="#3d9a47"/><rect x="852.0" y="151" width="1.2" height="6" fill="#9ccaf0"/><rect x="276" y="39" width="2" height="120" fill="#0a0aa0"/><rect x="354" y="39" width="2" height="120" fill="#0a0aa0"/><rect x="910" y="39" width="2" height="120" fill="#0a0aa0"/><rect x="380" y="39" width="2" height="120" fill="#b5140b"/><rect x="420" y="39" width="2" height="120" fill="#b5140b"/><rect x="456" y="39" width="2" height="120" fill="#b5140b"/><rect x="952" y="39" width="2" height="120" fill="#b5140b"/><rect x="1346" y="39" width="2" height="120" fill="#b5140b"/><rect x="1196" y="42" width="27" height="16" fill="#8a8a8a" stroke="#2a6ee0" stroke-width="4"/></svg>
<div style="position:absolute;left:691px;top:371px;width:4px;height:36px;background:#8a8a8a;"></div>
<div style="position:absolute;left:691px;top:407px;width:2px;height:124px;background:#cad0ea;"></div>
<div style="position:absolute;left:2183px;top:371px;width:4px;height:36px;background:#8a8a8a;"></div>
<div style="position:absolute;left:2185px;top:407px;width:2px;height:124px;background:#dfe7f6;"></div>
<div style="position:absolute;left:689px;top:531px;width:1498px;height:2px;background:#c4c7cc;"></div>
<div style="position:absolute;left:689px;top:533px;width:4px;height:738px;background:#c4c7cc;"></div>
<div style="position:absolute;left:693px;top:533px;width:390px;height:54px;background:#f1f3f4;"></div>
<div style="position:absolute;left:693px;top:587px;width:390px;height:2px;background:#c3c6cb;"></div>
<div style="position:absolute;left:702px;top:549.92px;font-family:'Liberation Sans',sans-serif;font-size:24px;line-height:24px;color:#202124;font-weight:400;white-space:nowrap;">Name</div>
<div style="position:absolute;left:693px;top:589px;width:390px;height:42px;background:#2a6ddf;"></div>
<div style="position:absolute;left:709px;top:598px;width:16px;height:20px;border:2px solid #fff;border-radius:2px;"></div>
<div style="position:absolute;left:743.5px;top:599.02px;font-family:'Liberation Sans',sans-serif;font-size:24px;line-height:24px;color:#ffffff;font-weight:400;white-space:nowrap;">collect?v=2&amp;tid=G-6Z5M7R…</div>
<div style="position:absolute;left:693px;top:631px;width:390px;height:584px;background:#ffffff;"></div>
<div style="position:absolute;left:693px;top:1215px;width:390px;height:2px;background:#c3c6cb;"></div>
<div style="position:absolute;left:693px;top:1217px;width:390px;height:54px;background:#f1f3f4;"></div>
<div style="position:absolute;left:714.5px;top:1232.32px;font-family:'Liberation Sans',sans-serif;font-size:24px;line-height:24px;color:#5f6368;font-weight:400;white-space:nowrap;">1 / 155 requests</div>
<div style="position:absolute;left:905px;top:1227px;width:2px;height:32px;background:#c3c6cb;"></div>
<div style="position:absolute;left:925.5px;top:1232.32px;font-family:'Liberation Sans',sans-serif;font-size:24px;line-height:24px;color:#5f6368;font-weight:400;white-space:nowrap;">17 B / 2.4 MB</div>
<div style="position:absolute;left:1083px;top:533px;width:4px;height:738px;background:#c4c7cc;"></div>
<div style="position:absolute;left:1087px;top:533px;width:1100px;height:52px;background:#f1f3f4;"></div>
<div style="position:absolute;left:1087px;top:585px;width:1100px;height:2px;background:#c3c6cb;"></div>
<svg style="position:absolute;left:1105px;top:550px;" width="16" height="16" viewBox="0 0 16 16"><path d="M1.5 1.5 L14.5 14.5 M14.5 1.5 L1.5 14.5" stroke="#5f6368" stroke-width="2.4"/></svg>
<div style="position:absolute;left:1155px;top:548.62px;font-family:'Liberation Sans',sans-serif;font-size:24px;line-height:24px;color:#5f6368;font-weight:400;white-space:nowrap;">Headers</div>
<div style="position:absolute;left:1285px;top:548.62px;font-family:'Liberation Sans',sans-serif;font-size:24px;line-height:24px;color:#202124;font-weight:400;white-space:nowrap;">Payload</div>
<div style="position:absolute;left:1411px;top:548.62px;font-family:'Liberation Sans',sans-serif;font-size:24px;line-height:24px;color:#5f6368;font-weight:400;white-space:nowrap;">Preview</div>
<div style="position:absolute;left:1535px;top:548.62px;font-family:'Liberation Sans',sans-serif;font-size:24px;line-height:24px;color:#5f6368;font-weight:400;white-space:nowrap;">Response</div>
<div style="position:absolute;left:1681px;top:548.62px;font-family:'Liberation Sans',sans-serif;font-size:24px;line-height:24px;color:#5f6368;font-weight:400;white-space:nowrap;">Initiator</div>
<div style="position:absolute;left:1800px;top:548.62px;font-family:'Liberation Sans',sans-serif;font-size:24px;line-height:24px;color:#5f6368;font-weight:400;white-space:nowrap;">Timing</div>
<div style="position:absolute;left:1265px;top:584px;width:126px;height:3px;background:#1a73e8;"></div>
<div style="position:absolute;left:1087px;top:587px;width:1085px;height:684px;background:#ffffff;"></div>
<div style="position:absolute;left:2172px;top:587px;width:15px;height:684px;background:#fafafa;border-bottom-right-radius:10px;"></div>
<div style="position:absolute;left:2172px;top:587px;width:1px;height:684px;background:#e6e6e6;"></div>
<div style="position:absolute;left:2176px;top:590px;width:8px;height:347px;border-radius:4px;background:#c1c1c1;"></div>
<svg style="position:absolute;left:1098px;top:612px;" width="16" height="11" viewBox="0 0 16 11"><path d="M0.5 0.5 H15.5 L8 10.5 Z" fill="#5f6368"/></svg>
<div style="position:absolute;left:1118px;top:606.32px;font-family:'Liberation Sans',sans-serif;font-size:24px;line-height:24px;color:#202124;font-weight:700;white-space:nowrap;">Query String Parameters</div>
<div style="position:absolute;left:1462.5px;top:606.32px;font-family:'Liberation Sans',sans-serif;font-size:24px;line-height:24px;color:#202124;font-weight:400;white-space:nowrap;">view source</div>
<div style="position:absolute;left:1650px;top:606.32px;font-family:'Liberation Sans',sans-serif;font-size:24px;line-height:24px;color:#202124;font-weight:400;white-space:nowrap;">view decoded</div>
<div style="position:absolute;left:1137px;top:654.64px;font-family:'Liberation Sans',sans-serif;font-size:23px;line-height:23px;color:#55595e;font-weight:700;white-space:nowrap;">v:</div>
<div style="position:absolute;left:1220px;top:657.22px;font-family:'Liberation Mono',monospace;font-size:22px;line-height:22px;color:#202124;font-weight:400;white-space:nowrap;">2</div>
<div style="position:absolute;left:1137px;top:698.64px;font-family:'Liberation Sans',sans-serif;font-size:23px;line-height:23px;color:#55595e;font-weight:700;white-space:nowrap;">tid:</div>
<div style="position:absolute;left:1220px;top:701.22px;font-family:'Liberation Mono',monospace;font-size:22px;line-height:22px;color:#202124;font-weight:400;white-space:nowrap;">G-6Z5M7RNJ9W</div>
<div style="position:absolute;left:1137px;top:742.64px;font-family:'Liberation Sans',sans-serif;font-size:23px;line-height:23px;color:#55595e;font-weight:700;white-space:nowrap;">gtm:</div>
<div style="position:absolute;left:1220px;top:745.22px;font-family:'Liberation Mono',monospace;font-size:22px;line-height:22px;color:#202124;font-weight:400;white-space:nowrap;">45je3510v9</div>
<div style="position:absolute;left:1137px;top:786.64px;font-family:'Liberation Sans',sans-serif;font-size:23px;line-height:23px;color:#55595e;font-weight:700;white-space:nowrap;">_p:</div>
<div style="position:absolute;left:1220px;top:789.22px;font-family:'Liberation Mono',monospace;font-size:22px;line-height:22px;color:#202124;font-weight:400;white-space:nowrap;">213706618</div>
<div style="position:absolute;left:1137px;top:1050.64px;font-family:'Liberation Sans',sans-serif;font-size:23px;line-height:23px;color:#55595e;font-weight:700;white-space:nowrap;">uaa:</div>
<div style="position:absolute;left:1137px;top:1094.64px;font-family:'Liberation Sans',sans-serif;font-size:23px;line-height:23px;color:#55595e;font-weight:700;white-space:nowrap;">uab:</div>
<div style="position:absolute;left:1137px;top:1138.64px;font-family:'Liberation Sans',sans-serif;font-size:23px;line-height:23px;color:#55595e;font-weight:700;white-space:nowrap;">uafvl:</div>
<div style="position:absolute;left:1137px;top:1182.64px;font-family:'Liberation Sans',sans-serif;font-size:23px;line-height:23px;color:#55595e;font-weight:700;white-space:nowrap;">uamb:</div>
<div style="position:absolute;left:1220px;top:1185.22px;font-family:'Liberation Mono',monospace;font-size:22px;line-height:22px;color:#202124;font-weight:400;white-space:nowrap;">0</div>
<div style="position:absolute;left:1137px;top:1226.64px;font-family:'Liberation Sans',sans-serif;font-size:23px;line-height:23px;color:#55595e;font-weight:700;white-space:nowrap;">uam:</div>
<div style="position:absolute;left:1417.5px;top:876.50px;font-family:'Liberation Mono',monospace;font-size:22.3px;line-height:22.3px;color:#202124;font-weight:400;white-space:nowrap;">131</div>
<div style="position:absolute;left:958.6px;top:603.4px;width:466.4px;height:466.4px;border-radius:50%;overflow:hidden;background:#fff;"><div style="position:absolute;left:16.4px;top:0;width:8px;height:466.4px;background:#c4c7cc;"></div><div style="position:absolute;left:124.4px;top:41.1px;font-family:'Liberation Sans',sans-serif;font-size:48px;line-height:48px;color:#55595e;font-weight:700;white-space:nowrap;letter-spacing:-0.3px;">gtm:</div><div style="position:absolute;left:252.2px;top:46.5px;font-family:'Liberation Mono',monospace;font-size:46px;line-height:46px;color:#25292e;font-weight:400;white-space:nowrap;letter-spacing:-1.2px;">45je3510v9</div><div style="position:absolute;left:124.4px;top:128.5px;font-family:'Liberation Sans',sans-serif;font-size:48px;line-height:48px;color:#55595e;font-weight:700;white-space:nowrap;letter-spacing:-0.3px;">_p:</div><div style="position:absolute;left:216.4px;top:133.9px;font-family:'Liberation Mono',monospace;font-size:46px;line-height:46px;color:#25292e;font-weight:400;white-space:nowrap;letter-spacing:-1.2px;">213706618131</div><div style="position:absolute;left:124.4px;top:216.6px;font-family:'Liberation Sans',sans-serif;font-size:48px;line-height:48px;color:#55595e;font-weight:700;white-space:nowrap;letter-spacing:-0.3px;">gcs:</div><div style="position:absolute;left:245.4px;top:222.0px;font-family:'Liberation Mono',monospace;font-size:46px;line-height:46px;color:#25292e;font-weight:400;white-space:nowrap;letter-spacing:-1.2px;">G111</div><div style="position:absolute;left:124.4px;top:304.6px;font-family:'Liberation Sans',sans-serif;font-size:48px;line-height:48px;color:#55595e;font-weight:700;white-space:nowrap;letter-spacing:-0.3px;">cid:</div><div style="position:absolute;left:231.9px;top:310.0px;font-family:'Liberation Mono',monospace;font-size:46px;line-height:46px;color:#25292e;font-weight:400;white-space:nowrap;letter-spacing:-1.2px;">442752961.16</div><div style="position:absolute;left:124.4px;top:392.0px;font-family:'Liberation Sans',sans-serif;font-size:48px;line-height:48px;color:#55595e;font-weight:700;white-space:nowrap;letter-spacing:-0.3px;">ul:</div><div style="position:absolute;left:203.4px;top:397.4px;font-family:'Liberation Mono',monospace;font-size:46px;line-height:46px;color:#25292e;font-weight:400;white-space:nowrap;letter-spacing:-1.2px;">de–de</div></div>
<div style="position:absolute;left:958.1px;top:602.9px;width:467.4px;height:467.4px;border-radius:50%;box-sizing:border-box;border:2.6px solid #7f7f7f;box-shadow:0 0 2px 1px rgba(0,0,0,0.10);"></div>
<div style="position:absolute;left:177px;top:250px;width:391px;height:845px;box-shadow:0 0 40px 12px rgba(0,0,0,0.045);border:1px solid #cfd2d2;background:#fff;"></div>
<div style="position:absolute;left:178px;top:251px;width:390px;height:66px;background:#ffffff;"></div>
<svg style="position:absolute;left:190px;top:250px;" width="160" height="65" viewBox="0 0 160 65"><g fill="none" stroke="#2e5e52" stroke-width="4.4" stroke-linejoin="round"><path d="M30.8 15 L24.8 42.8"/><path d="M42.6 15 L36.4 42.8"/><path d="M28.5 29.2 L40 28.8"/><path d="M39.5 31.5 Q46 32.5 52 30.5 Q57 28 55.5 25.5 Q53 22.5 48.5 25.5 Q43.5 29.5 44 36 Q45 43 52 41 Q56 40 59 37.5"/><path d="M65 17.8 L59.6 38.5 Q58.8 42.8 63.5 41.5 Q67 40 70 37"/><path d="M71.8 24 L65.8 51.8"/><path d="M71 28.5 Q76 23.8 80.5 25.5 Q84 28 82 34 Q79.5 41 73.5 41.5 Q70 41.5 68.5 40"/><path d="M82 39 Q87 39 89 36"/><path d="M94 17.8 L88.6 38.5 Q87.8 42.8 92.5 41.5 Q96 40 98.5 37"/><path d="M103.8 24 L99 38.5 Q98.2 42.8 102.8 41.5 Q105 40.5 107 38"/><path d="M111.5 24 L106.3 42.8"/><path d="M109.8 30 Q114 24.5 118.5 24.8 Q122.8 25.5 122 30 L119.4 42.8"/><path d="M138.8 27 Q134 23.5 130 25.8 Q126 28.5 125.8 36 Q125.8 42.3 131 41.6 Q135 41 137.8 35"/><path d="M141 24 L134.8 49.5 Q133.2 53.5 128 51.5"/></g><rect x="101.3" y="17.6" width="5" height="3.6" fill="#2e5e52" transform="skewX(-12)" style="transform-origin:101px 19px"/></svg>
<svg style="position:absolute;left:431px;top:279px;" width="16" height="11" viewBox="0 0 16 11"><rect x="0" y="0" width="16" height="3.7" fill="#222"/><rect x="0" y="3.7" width="16" height="3.6" fill="#d4262b"/><rect x="0" y="7.3" width="16" height="3.7" fill="#f2c31b"/><rect x="0.25" y="0.25" width="15.5" height="10.5" fill="none" stroke="#777" stroke-width="0.5"/></svg>
<div style="position:absolute;left:451px;top:277.52px;font-family:'Liberation Sans',sans-serif;font-size:14px;line-height:14px;color:#333;font-weight:400;white-space:nowrap;-webkit-text-stroke:0.45px #333;letter-spacing:0.3px;">DE</div>
<svg style="position:absolute;left:483px;top:281px;" width="10" height="7" viewBox="0 0 10 7"><path d="M0.5 1 H9 L4.75 6 Z" fill="#333"/></svg>
<div style="position:absolute;left:519.5px;top:280.5px;width:14px;height:2px;background:#333;"></div>
<div style="position:absolute;left:519.5px;top:284.5px;width:14px;height:2px;background:#333;"></div>
<div style="position:absolute;left:519.5px;top:288.5px;width:14px;height:2px;background:#333;"></div>
<div style="position:absolute;left:178px;top:317px;width:390px;height:341px;background:#5e8279;"></div>
<div style="position:absolute;left:204px;top:345.55px;font-family:'Liberation Sans',sans-serif;font-size:22.5px;line-height:22.5px;color:#ffffff;font-weight:400;white-space:nowrap;letter-spacing:0.75px;-webkit-text-stroke:0.7px #fff;transform:scaleX(1.04);transform-origin:left;">Finden Sie Ihre persönliche</div>
<div style="position:absolute;left:204px;top:375.55px;font-family:'Liberation Sans',sans-serif;font-size:22.5px;line-height:22.5px;color:#ffffff;font-weight:400;white-space:nowrap;letter-spacing:1.0px;-webkit-text-stroke:0.7px #fff;transform:scaleX(1.04);transform-origin:left;">Reinigungskraft</div>
<div style="position:absolute;left:203.5px;top:425.9px;width:7.5px;height:7.5px;background:#ffffff;"></div>
<div style="position:absolute;left:218px;top:421.69px;font-family:'Liberation Sans',sans-serif;font-size:15.5px;line-height:15.5px;color:#ffffff;font-weight:400;white-space:nowrap;letter-spacing:0.32px;">Bewertungen und Preise vergleichen</div>
<div style="position:absolute;left:203.5px;top:454.9px;width:7.5px;height:7.5px;background:#ffffff;"></div>
<div style="position:absolute;left:218px;top:450.69px;font-family:'Liberation Sans',sans-serif;font-size:15.5px;line-height:15.5px;color:#ffffff;font-weight:400;white-space:nowrap;letter-spacing:0.32px;">Persönlicher Kundenservice</div>
<div style="position:absolute;left:203.5px;top:483.9px;width:7.5px;height:7.5px;background:#ffffff;"></div>
<div style="position:absolute;left:218px;top:479.69px;font-family:'Liberation Sans',sans-serif;font-size:15.5px;line-height:15.5px;color:#ffffff;font-weight:400;white-space:nowrap;letter-spacing:0.32px;">Haftpflichtversichert bis zu 5 Mio. Euro</div>
<div style="position:absolute;left:203.5px;top:512.9px;width:7.5px;height:7.5px;background:#ffffff;"></div>
<div style="position:absolute;left:218px;top:508.69px;font-family:'Liberation Sans',sans-serif;font-size:15.5px;line-height:15.5px;color:#ffffff;font-weight:400;white-space:nowrap;letter-spacing:0.32px;">Keine Vertragslaufzeit, jederzeit kündbar</div>
<div style="position:absolute;left:203px;top:553px;width:310px;height:44px;background:#fff;border-radius:3px;"></div>
<div style="position:absolute;left:-142px;width:1000px;text-align:center;top:566.99px;font-family:'Liberation Sans',sans-serif;font-size:15.5px;line-height:15.5px;color:#9a9a9a;font-weight:400;white-space:nowrap;">Postleitzahl</div>
<div style="position:absolute;left:203px;top:602px;width:310px;height:39px;background:#2c4744;border-radius:4px;"></div>
<div style="position:absolute;left:-142px;width:1000px;text-align:center;top:613.70px;font-family:'Liberation Sans',sans-serif;font-size:15px;line-height:15px;color:#ffffff;font-weight:700;white-space:nowrap;">Los geht's</div>
<svg style="position:absolute;left:178px;top:658px;filter:blur(0.4px);" width="390" height="243" viewBox="0 0 390 243">
<defs>
<linearGradient id="wall" x1="0" x2="1" y1="0" y2="0"><stop offset="0" stop-color="#d2ccd8"/><stop offset="0.3" stop-color="#d7d1de"/><stop offset="0.7" stop-color="#cdc5d8"/><stop offset="1" stop-color="#c6bdd2"/></linearGradient>
<linearGradient id="wood" x1="0" x2="0" y1="0" y2="1"><stop offset="0" stop-color="#c4ad95"/><stop offset="1" stop-color="#b59c83"/></linearGradient>
<radialGradient id="hair" cx="0.45" cy="0.35" r="0.7"><stop offset="0" stop-color="#c8a278"/><stop offset="0.6" stop-color="#a98058"/><stop offset="1" stop-color="#7e5c3e"/></radialGradient>
<radialGradient id="face" cx="0.45" cy="0.45" r="0.6"><stop offset="0" stop-color="#e2ae92"/><stop offset="1" stop-color="#c98f74"/></radialGradient>
</defs>
<rect x="0" y="0" width="390" height="243" fill="url(#wall)"/>
<rect x="0" y="0" width="30" height="243" fill="#9a909c"/>
<rect x="30" y="0" width="26" height="243" fill="#6d656c"/>
<rect x="56" y="0" width="17" height="200" fill="#98939f"/>
<rect x="0" y="224" width="30" height="19" fill="#e6e3ea"/>
<!-- picture frame -->
<rect x="350" y="0" width="40" height="30" fill="#a88a6c"/><rect x="362" y="0" width="28" height="30" fill="#e9e6e0"/>
<!-- shelves -->
<rect x="249.5" y="54" width="2.5" height="56" fill="#8f7d6a"/>
<rect x="334" y="22" width="3" height="118" fill="#8f7d6a"/>
<rect x="331" y="31" width="59" height="3" fill="#5d556b"/>
<rect x="245" y="63" width="145" height="3" fill="#5d556b"/>
<rect x="245" y="95" width="95" height="3" fill="#5d556b"/>
<rect x="261" y="127" width="79" height="2.5" fill="#5d556b"/>
<rect x="268" y="50" width="8" height="13" fill="#b9a98c"/><circle cx="272" cy="49" r="4" fill="#7d9460"/>
<ellipse cx="306" cy="59" rx="8" ry="4" fill="#cdbb9c"/><rect x="318" y="49" width="14" height="14" rx="5" fill="#e6ddd0"/><rect x="340" y="54" width="15" height="9" rx="3" fill="#f1efec"/><rect x="355" y="49" width="13" height="14" fill="#ecebe8"/>
<ellipse cx="261" cy="90" rx="10" ry="5.5" fill="#7c5f99"/><rect x="273" y="82" width="10" height="13" rx="3" fill="#dcd5d0"/><path d="M289 95 L305 73 L309 75 L294 95Z" fill="#f0eeea"/><rect x="302" y="85" width="29" height="10" fill="#ecebe6"/>
<circle cx="291" cy="112" r="7" fill="#6f9a4c"/><circle cx="308" cy="108" r="9" fill="#5c9040"/><circle cx="326" cy="110" r="8" fill="#5a8a45"/>
<rect x="286" y="117" width="11" height="11" fill="#f4f2ef"/><rect x="302" y="117" width="12" height="11" fill="#f4f2ef"/><rect x="319" y="117" width="12" height="11" fill="#f4f2ef"/>
<!-- counter & cabinets -->
<path d="M31 196 L390 186 L390 201 L31 202 Z" fill="#716e75"/>
<rect x="31" y="201" width="359" height="42" fill="url(#wood)"/>
<rect x="106" y="201" width="2" height="42" fill="#9c846c"/><rect x="246" y="201" width="2" height="42" fill="#9c846c"/><rect x="322" y="201" width="2" height="42" fill="#9c846c"/>
<rect x="248" y="228" width="74" height="1.5" fill="#9c846c"/>
<!-- microwave -->
<rect x="45" y="166" width="64" height="31" fill="#c6bfb7"/><rect x="46" y="167" width="6" height="29" fill="#e8e4de"/><rect x="54" y="174" width="12" height="16" fill="#6e6660"/><rect x="66" y="173" width="17" height="16" fill="#f6f6f4"/><rect x="100" y="167" width="6" height="29" fill="#e0dcd6"/>
<rect x="137" y="160" width="16" height="36" fill="#cbc3b6"/>
<!-- pots right -->
<rect x="322" y="178" width="26" height="13" rx="3" fill="#f0eeeb"/><rect x="358" y="172" width="18" height="16" rx="3" fill="#e6e2de"/>
<rect x="281" y="190" width="20" height="5" fill="#d8d6d8"/>
<!-- woman -->
<path d="M164 111 Q150 118 154 131 L156 154 L169 159 Q160 200 158 243 L246 243 Q244 200 243 161 L265 154 L263 131 Q258 110 236 102 L229 88 Q212 96 193 93 L181 107 Z" fill="#2b5849"/>
<path d="M181 107 L193 93 L203 101 L196 114 Z M229 88 L236 102 L222 112 L212 100 Z" fill="#2f6151"/>
<rect x="205" y="110" width="2" height="25" fill="#24493d"/>
<path d="M157 153 Q150 175 149 195 Q150 204 160 200 L176 176 L170 160 Z" fill="#d39b7e"/>
<path d="M165 158 Q175 152 190 160 Q194 172 188 180 L172 184 Q164 176 165 158 Z" fill="#dba588"/>
<rect x="170" y="168" width="20" height="29" rx="3" fill="#d9dcda"/>
<path d="M243 160 L264 154 Q272 178 270 198 Q266 214 240 220 L214 222 L192 214 L196 204 L216 206 Q244 200 250 190 Q252 176 243 160 Z" fill="#d6a083"/>
<path d="M140 210 Q160 196 202 194 Q214 200 211 216 Q196 228 176 229 Q152 226 143 217 Z" fill="#1f2838"/>
<rect x="215" y="209" width="7" height="12" rx="1.5" fill="#1a1a1a"/>
<path d="M192 78 L222 76 L224 100 Q208 106 192 98 Z" fill="#c98f74"/>
<path d="M184 50 Q182 84 203 87 Q223 86 229 56 L226 42 Q205 34 186 42 Z" fill="url(#face)"/>
<path d="M194 72 Q204 79 214 72 Q204 76 194 72 Z" fill="#fff" stroke="#a86552" stroke-width="1"/>
<ellipse cx="196" cy="57" rx="2.2" ry="1.3" fill="#5a4a40"/><ellipse cx="213" cy="57" rx="2.2" ry="1.3" fill="#5a4a40"/>
<path d="M180 58 Q174 28 204 19 Q234 17 237 46 Q237 58 229 63 Q228 50 220 47 Q200 40 190 50 Q186 56 185 62 Z" fill="url(#hair)"/>
</svg>
<div style="position:absolute;left:178px;top:901px;width:390px;height:194px;background:#edf0ef;"></div>
<div style="position:absolute;left:-127px;width:1000px;text-align:center;top:952.03px;font-family:'Liberation Sans',sans-serif;font-size:24.6px;line-height:24.6px;color:#191919;font-weight:400;white-space:nowrap;">Hervorragend</div>
<svg style="position:absolute;left:292px;top:987px;" width="163" height="30" viewBox="0 0 163 30"><rect x="0" y="0" width="30" height="30" fill="#48aa72"/><polygon points="15.00,6.00 17.29,12.34 24.04,12.56 18.71,16.71 20.58,23.19 15.00,19.40 9.42,23.19 11.29,16.71 5.96,12.56 12.71,12.34" fill="#fff"/><rect x="33" y="0" width="30" height="30" fill="#48aa72"/><polygon points="48.00,6.00 50.29,12.34 57.04,12.56 51.71,16.71 53.58,23.19 48.00,19.40 42.42,23.19 44.29,16.71 38.96,12.56 45.71,12.34" fill="#fff"/><rect x="66" y="0" width="30" height="30" fill="#48aa72"/><polygon points="81.00,6.00 83.29,12.34 90.04,12.56 84.71,16.71 86.58,23.19 81.00,19.40 75.42,23.19 77.29,16.71 71.96,12.56 78.71,12.34" fill="#fff"/><rect x="99" y="0" width="30" height="30" fill="#48aa72"/><polygon points="114.00,6.00 116.29,12.34 123.04,12.56 117.71,16.71 119.58,23.19 114.00,19.40 108.42,23.19 110.29,16.71 104.96,12.56 111.71,12.34" fill="#fff"/><rect x="132" y="0" width="15.3" height="30" fill="#48aa72"/><rect x="147.3" y="0" width="14.7" height="30" fill="#d7d6e0"/><polygon points="147.00,6.00 149.29,12.34 156.04,12.56 150.71,16.71 152.58,23.19 147.00,19.40 141.42,23.19 143.29,16.71 137.96,12.56 144.71,12.34" fill="#fff"/></svg>
<div style="position:absolute;left:275px;top:1031.37px;font-family:'Liberation Sans',sans-serif;font-size:12.6px;line-height:12.6px;color:#555555;font-weight:400;white-space:nowrap;padding-bottom:2px;">Basierend auf <span style="color:#191919;font-weight:700;border-bottom:1px solid #191919;">5.485 Bewertungen</span></div>
<svg style="position:absolute;left:320px;top:1061px;" width="25" height="25" viewBox="0 0 25 25"><polygon points="12.50,0.50 15.44,8.95 24.39,9.14 17.26,14.55 19.85,23.11 12.50,18.00 5.15,23.11 7.74,14.55 0.61,9.14 9.56,8.95" fill="#48aa72"/></svg>
<div style="position:absolute;left:348px;top:1066.81px;font-family:'Liberation Sans',sans-serif;font-size:19.5px;line-height:19.5px;color:#191919;font-weight:400;white-space:nowrap;letter-spacing:-0.3px;">Trustpilot</div>
</body></html>
